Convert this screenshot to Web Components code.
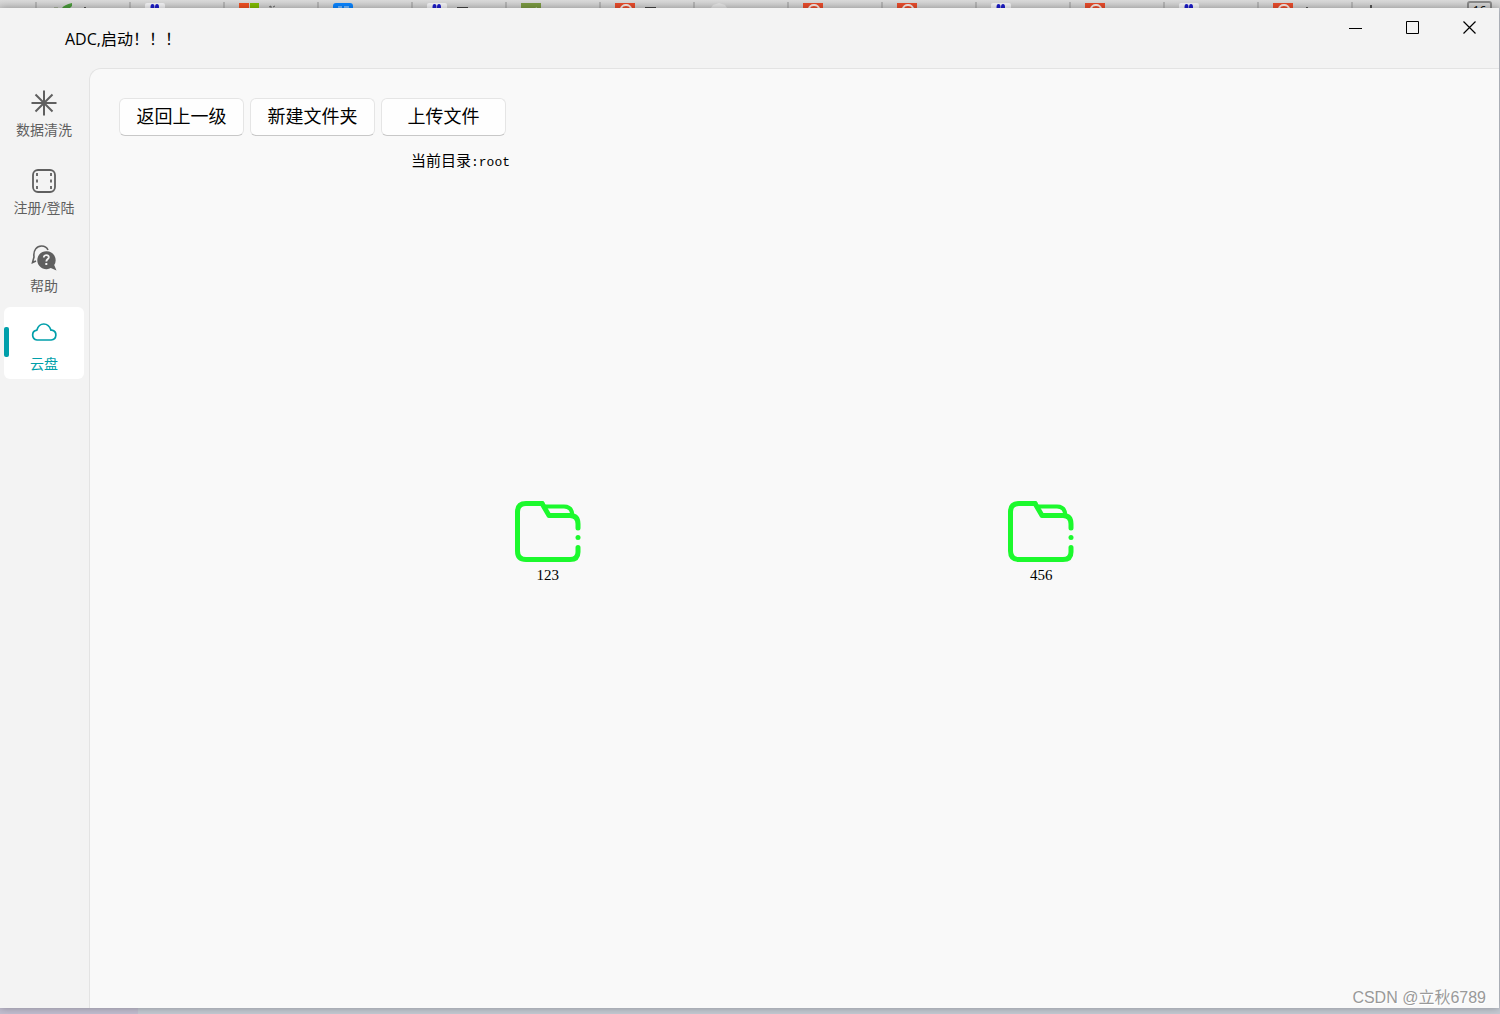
<!DOCTYPE html>
<html lang="zh-CN">
<head>
<meta charset="utf-8">
<title>ADC</title>
<style>
  html, body { height: 100%; }
  body {
    margin: 0;
    overflow: hidden;
    font-family: "Open Sans", "Noto Sans CJK SC", sans-serif;
    font-size: 16px;
    color: #000;
  }
</style>
</head>
<body>
<adc-desktop>
  <adc-window>
    <adc-title-bar slot="title">ADC,启动！！！</adc-title-bar>
    <adc-nav slot="nav">
      <adc-nav-item icon="star">数据清洗</adc-nav-item>
      <adc-nav-item icon="film">注册/登陆</adc-nav-item>
      <adc-nav-item icon="help">帮助</adc-nav-item>
      <adc-nav-item icon="cloud" active>云盘</adc-nav-item>
    </adc-nav>
    <adc-drive path="root">
      <adc-button slot="actions">返回上一级</adc-button>
      <adc-button slot="actions">新建文件夹</adc-button>
      <adc-button slot="actions">上传文件</adc-button>
      <adc-folder>123</adc-folder>
      <adc-folder>456</adc-folder>
    </adc-drive>
  </adc-window>
  <adc-watermark slot="overlay">CSDN @立秋6789</adc-watermark>
</adc-desktop>

<script>
const define = (name, html, setup) => {
  const template = document.createElement('template');
  template.innerHTML = html;
  customElements.define(name, class extends HTMLElement {
    constructor() {
      super();
      this.attachShadow({mode: 'open'}).append(template.content.cloneNode(true));
    }

    connectedCallback() {
      if(setup) setup(this, this.shadowRoot);
    }
  });
};

// Only the top of each tab's favicon shows above the window.
const favicons = {
  leaf: '<path d="M11 5 Q13 2 21 0 V3L19 5Z" fill="#4b9b3b"/><path d="M3 4h4v1H3z" fill="#a5b09c"/>',
  paw: '<rect width="20" height="8" rx="2" fill="#f3f3f5"/><ellipse cx="7.500" cy="4" rx="2" ry="3" fill="#1c1cc8"/><ellipse cx="12" cy="4" rx="2" ry="3" fill="#1c1cc8"/>',
  windows: '<path d="M0 0h10v5H0z" fill="#f05022"/><path d="M11 0h9v5h-9z" fill="#7fba00"/>',
  zhihu: '<rect width="20" height="8" rx="3" fill="#0a84ff"/><path d="M5 4h4M11 4h5" stroke="#d4eaff"/>',
  green: '<path d="M0 0h20v5H0z" fill="#7b9a41"/><path d="M14 5l2-1v1z" fill="#b9cc94"/>',
  csdn: '<path d="M0 0h20v5H0z" fill="#e84c2b"/><path d="M6 6a5 4 0 0 1 10 0" fill="none" stroke="#f5e8e4" stroke-width="2"/>',
  white: '<path d="M2 5l2-3 3-1 3-1 3 1 3 1 2 3z" fill="#e4e4e4"/>',
  mark: '<path d="M3 2h2v3H3z" fill="#555"/>'
};

define('adc-tab', `
  <style>
    :host {
      display: block;
      box-sizing: border-box;
      flex: 0 0 94px;
      height: 8px;
      padding: 3px 0 0 16px;
      overflow: hidden;
      background: linear-gradient(#b4b4b4, #b4b4b4) 0 2px / 2px 6px no-repeat;
    }
    svg { display: block; }
  </style>
  <svg width="60" height="5"></svg>
`, (el, root) => {
  const extra = {
    bar: '<path d="M30 4h11v1H30z" fill="#444"/>',
    text: '<path d="M30 4l2-1v2M34 4l2-1" stroke="#666" fill="none"/>',
    dot: '<path d="M33 4h2v1h-2z" fill="#555"/>'
  };
  root.querySelector('svg').innerHTML = favicons[el.getAttribute('icon')] + (extra[el.getAttribute('extra')] || '');
});

define('adc-desktop', `
  <style>
    :host {
      display: flex;
      flex-direction: column;
      position: relative;
      height: 100vh;
      background: linear-gradient(90deg, #c2bed0 0 138px, #c5cad3 138px);
    }
    .tabs {
      display: flex;
      box-sizing: border-box;
      height: 8px;
      padding-left: 35px;
      overflow: hidden;
      background: linear-gradient(#dadada, #cecece);
    }
    .count {
      flex: none;
      box-sizing: border-box;
      width: 25px;
      height: 20px;
      margin: 1px 8px 0 auto;
      border: 2px solid #8a8a8a;
      border-radius: 3px;
      font: 12px/16px "Open Sans", sans-serif;
      text-align: center;
    }
    .main {
      display: flex;
      flex: 1;
      min-height: 0;
      padding: 0 1px 6px 0;
    }
  </style>
  <div class="tabs">
    <adc-tab icon="leaf" extra="dot"></adc-tab>
    <adc-tab icon="paw"></adc-tab>
    <adc-tab icon="windows" extra="text"></adc-tab>
    <adc-tab icon="zhihu"></adc-tab>
    <adc-tab icon="paw" extra="bar"></adc-tab>
    <adc-tab icon="green"></adc-tab>
    <adc-tab icon="csdn" extra="bar"></adc-tab>
    <adc-tab icon="white"></adc-tab>
    <adc-tab icon="csdn"></adc-tab>
    <adc-tab icon="csdn"></adc-tab>
    <adc-tab icon="paw"></adc-tab>
    <adc-tab icon="csdn"></adc-tab>
    <adc-tab icon="paw"></adc-tab>
    <adc-tab icon="csdn" extra="dot"></adc-tab>
    <adc-tab icon="mark"></adc-tab>
    <span class="count">16</span>
  </div>
  <div class="main"><slot></slot></div>
  <slot name="overlay"></slot>
`);

define('adc-window', `
  <style>
    :host {
      display: grid;
      flex: 1;
      grid-template: auto 1fr / 89px 1fr;
      background: #f3f3f3;
      box-shadow: 0 0 8px rgba(0, 0, 0, .3);
    }
    header { grid-column: 1 / -1; }
    main {
      display: grid;
      border: solid #e3e3e3;
      border-width: 1px 0 0 1px;
      border-top-left-radius: 12px;
      background: #f9f9f9;
    }
  </style>
  <header><slot name="title"></slot></header>
  <slot name="nav"></slot>
  <main><slot></slot></main>
`);

define('adc-title-bar', `
  <style>
    :host {
      display: flex;
      justify-content: space-between;
      height: 60px;
      padding: 0 1px 0 65px;
    }
    .title {
      font-size: 16px;
      font-weight: 400;
      line-height: 22px;
      margin: 20px 0 0;
    }
    .controls { display: flex; }
    button {
      display: grid;
      place-items: center;
      width: 57px;
      height: 39px;
      padding: 0;
      border: 0;
      background: none;
    }
    button:hover { background: #e5e5e5; }
    svg {
      fill: none;
      stroke: #000;
    }
  </style>
  <h1 class="title"><slot></slot></h1>
  <div class="controls">
    <button aria-label="最小化"><svg width="13" height="13"><path d="M0 7.500h13"/></svg></button>
    <button aria-label="最大化"><svg width="13" height="13"><path d="M.5.5h12v12H.5z"/></svg></button>
    <button aria-label="关闭"><svg width="13" height="13"><path d="M.5.5l12 12M12.500.5l-12 12" stroke-width="1.200"/></svg></button>
  </div>
`);

define('adc-nav', `
  <style>
    :host { display: block; }
    nav {
      display: flex;
      flex-direction: column;
      gap: 6px;
      padding: 5px 5px 0 4px;
    }
  </style>
  <nav><slot></slot></nav>
`);

const navIcons = {
  star: '<path d="M14 2.500v25M1.500 15h25M5.500 6.500l17 17M22.500 6.500l-17 17" stroke-width="2"/>',
  film: `<rect x="3" y="4" width="22" height="22" rx="5" stroke-width="1.800"/>
    <path d="M7 7v3M7 13.500v3M7 20v3M21 7v3M21 13.500v3M21 20v3" stroke-width="1.800"/>`,
  help: `<path d="M6 17l-3.500 1.500 1.500-5.500C3 6 7 2 11.500 2c3 0 5.500 1.500 6.500 4" stroke-width="1.600"/>
    <path d="M16.500 7.200a9 9 0 1 0 4.300 16.800l5.700 2.500-2.300-5.500a9 9 0 0 0-7.700-13.800z" fill="currentColor" stroke="none"/>
    <path d="M13.800 13.500c0-3.500 5.500-3 5 0-.3 1.500-2.500 1.800-2.500 4" stroke="#f3f3f3" stroke-width="1.800"/>
    <path d="M15.300 19h2v2h-2z" fill="#f3f3f3" stroke="none"/>`,
  cloud: '<path d="M7 18h14.200a5 5 0 0 0 .6-9.900h-.9C19.700 4.300 17 2 13.800 2S8 4.300 6.900 8.100A5 5 0 0 0 7 18z" stroke-width="1.700"/>'
};

define('adc-nav-item', `
  <style>
    :host {
      display: block;
      color: #5f5f5f;
    }
    a {
      display: flex;
      flex-direction: column;
      align-items: center;
      gap: 4px;
      position: relative;
      box-sizing: border-box;
      height: 72px;
      padding-top: 15px;
      border-radius: 6px;
      color: inherit;
      font-size: 14px;
      line-height: 20px;
      text-decoration: none;
    }
    svg {
      width: 28px;
      height: 28px;
      fill: none;
      stroke: currentColor;
    }
    :host([active]) { color: #009faa; }
    :host([active]) a { background: #fff; }
    :host([active]) a::before {
      content: '';
      position: absolute;
      left: 0;
      top: 20px;
      width: 5px;
      height: 30px;
      border-radius: 2px;
      background: #009faa;
    }
  </style>
  <a href="#"><svg viewBox="0 0 28 28"></svg><span><slot></slot></span></a>
`, (el, root) => {
  root.querySelector('svg').innerHTML = navIcons[el.getAttribute('icon')];
});

define('adc-button', `
  <style>
    :host { display: block; }
    button {
      display: block;
      width: 125px;
      height: 38px;
      padding: 0 0 2px;
      border: 1px solid #e5e5e5;
      border-bottom-color: #c8c8c8;
      border-radius: 6px;
      background: #fefefe;
      color: #000;
      font: inherit;
      font-size: 18px;
      line-height: 24px;
    }
    button:hover { background: #f6f6f6; }
  </style>
  <button><slot></slot></button>
`);

define('adc-drive', `
  <style>
    :host {
      display: flex;
      flex-direction: column;
    }
    .top {
      display: flex;
      flex-direction: column;
      align-items: flex-end;
      align-self: flex-start;
      gap: 14px;
      padding: 29px 29px 0;
    }
    .actions {
      display: flex;
      gap: 6px;
      padding-right: 4px;
    }
    .path {
      font-size: 15px;
      line-height: 20px;
    }
    .name { font: 13px "Liberation Mono", monospace; }
    .files {
      display: flex;
      flex: 1;
      align-items: center;
      justify-content: space-evenly;
      padding-bottom: 94px;
    }
  </style>
  <div class="top">
    <div class="actions"><slot name="actions"></slot></div>
    <div class="path">当前目录<span class="name"></span></div>
  </div>
  <div class="files"><slot></slot></div>
`, (el, root) => {
  root.querySelector('.name').textContent = `:${el.getAttribute('path')}`;
});

define('adc-folder', `
  <style>
    :host {
      display: flex;
      flex-direction: column;
      align-items: center;
      width: 72px;
      font: 15px/20px "Liberation Serif", serif;
    }
    svg {
      fill: none;
      stroke: #1cf92d;
      stroke-width: 5;
      stroke-linecap: round;
      stroke-linejoin: round;
    }
  </style>
  <svg width="72" height="66" viewBox="0 0 72 66">
    <path d="M30 4.500H14Q5.500 4.500 5.500 13v39Q5.500 60.500 14 60.500h44Q66 60.500 66 53v-4.500"/>
    <path d="M30 4.500l7 12h21Q66 16.500 66 25v4"/>
    <path d="M33 7.500h19Q60 7.500 60.500 16.500" stroke-width="4"/>
    <circle cx="66" cy="38.500" r="2.500" fill="#1cf92d" stroke="none"/>
  </svg>
  <slot></slot>
`);

define('adc-watermark', `
  <style>
    :host {
      position: absolute;
      right: 14px;
      bottom: 6px;
      color: #999;
      font: 16px/20px "Liberation Sans", "Noto Sans CJK SC", sans-serif;
      text-shadow: 1px 1px 0 #fff;
    }
  </style>
  <slot></slot>
`);
</script>
</body>
</html>
